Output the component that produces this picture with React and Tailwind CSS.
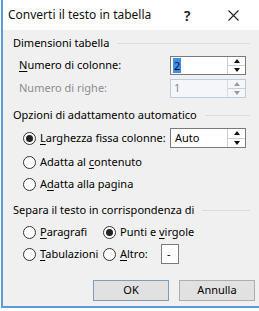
import React from 'react';

const font = { fontFamily: '"Noto Sans", Lato, sans-serif' };

const Header = ({ children, className = '' }) => (
  <div className={`flex items-center h-[16px] pl-[10px] pr-[9px] ${className}`}>
    <span className="whitespace-nowrap text-black">{children}</span>
    <div className="flex-1 h-px bg-[#dcdcdc] ml-[8px]" />
  </div>
);

const Radio = ({ checked }) => (
  <span className="w-[13px] h-[13px] rounded-full border border-[#333] bg-white flex items-center justify-center shrink-0">
    {checked && <span className="w-[7px] h-[7px] rounded-full bg-[#222]" />}
  </span>
);

const Spinner = ({ disabled }) => (
  <div className={`w-[18px] flex flex-col border-l ${disabled ? 'border-[#dcdcdc]' : 'border-[#cfcfcf]'}`}>
    <div className="flex-1 flex items-center justify-center border-b border-[#cfcfcf]">
      <span className={`w-0 h-0 border-l-[3px] border-r-[3px] border-b-[4px] border-l-transparent border-r-transparent ${disabled ? 'border-b-[#9a9a9a]' : 'border-b-[#111]'}`} />
    </div>
    <div className="flex-1 flex items-center justify-center">
      <span className={`w-0 h-0 border-l-[3px] border-r-[3px] border-t-[4px] border-l-transparent border-r-transparent ${disabled ? 'border-t-[#9a9a9a]' : 'border-t-[#111]'}`} />
    </div>
  </div>
);

const Underline = ({ children }) => <span className="underline underline-offset-2">{children}</span>;

export default function App() {
  return (
    <div className="w-[259px] h-[311px] bg-white overflow-hidden text-[11px] text-black" style={font}>
      <div className="ml-[1px] h-[308px] border-l-2 border-b-2 border-[#5b9bd8] flex flex-col">
        {/* title bar */}
        <div className="h-[30px] bg-white flex items-center pl-[5px] shrink-0">
          <span className="text-[12px] text-[#111] whitespace-nowrap">Converti il testo in tabella</span>
          <span className="ml-auto text-[14px] text-[#111] font-semibold w-[10px]">?</span>
          <svg className="ml-[34px] mr-[20px]" width="11" height="11" viewBox="0 0 11 11">
            <path d="M0.5 0.5 L10.5 10.5 M10.5 0.5 L0.5 10.5" stroke="#222" strokeWidth="1.1" />
          </svg>
        </div>

        {/* body */}
        <div className="flex-1 bg-[#f0f0f0] flex flex-col pt-[5px]">
          <Header>Dimensioni tabella</Header>

          <div className="mt-[5px] h-[19px] flex items-center pl-[16px] pr-[13px]">
            <span className="whitespace-nowrap"><Underline>N</Underline>umero di colonne:</span>
            <div className="ml-auto w-[76px] h-[19px] border border-[#7a7a7a] bg-white flex">
              <div className="flex-1 flex items-center pl-[2px]">
                <span className="bg-[#3f8fe0] text-[#0a0a40] leading-[15px] px-px">2</span>
              </div>
              <Spinner />
            </div>
          </div>

          <div className="mt-[4px] h-[19px] flex items-center pl-[16px] pr-[13px]">
            <span className="whitespace-nowrap text-[#8d8d8d]">Numero di righe:</span>
            <div className="ml-auto w-[76px] h-[19px] border border-[#b9cde6] bg-[#f4f6f9] flex">
              <div className="flex-1 flex items-center pl-[3px] text-[#8d8d8d]">1</div>
              <Spinner disabled />
            </div>
          </div>

          <Header className="mt-[9px]">Opzioni di adattamento automatico</Header>

          <div className="mt-[5px] h-[20px] flex items-center pl-[20px] pr-[13px]">
            <Radio checked />
            <span className="ml-[4px] whitespace-nowrap"><Underline>L</Underline>arghezza fissa colonne:</span>
            <div className="ml-auto w-[76px] h-[20px] border border-[#7a7a7a] bg-white flex">
              <div className="flex-1 flex items-center pl-[4px]">Auto</div>
              <Spinner />
            </div>
          </div>

          <div className="mt-[4px] h-[20px] flex items-center pl-[20px]">
            <Radio />
            <span className="ml-[4px] whitespace-nowrap">Adatta al <Underline>c</Underline>ontenuto</span>
          </div>

          <div className="mt-[2px] h-[20px] flex items-center pl-[20px]">
            <Radio />
            <span className="ml-[4px] whitespace-nowrap">A<Underline>d</Underline>atta alla pagina</span>
          </div>

          <Header className="mt-[8px]">Separa il testo in corrispondenza di</Header>

          <div className="mt-[4px] h-[20px] flex items-center pl-[20px]">
            <div className="w-[80px] flex items-center">
              <Radio />
              <span className="ml-[4px] whitespace-nowrap"><Underline>P</Underline>aragrafi</span>
            </div>
            <Radio checked />
            <span className="ml-[4px] whitespace-nowrap">Punti e <Underline>v</Underline>irgole</span>
          </div>

          <div className="mt-[2px] h-[20px] flex items-center pl-[20px]">
            <div className="w-[80px] flex items-center">
              <Radio />
              <span className="ml-[4px] whitespace-nowrap"><Underline>T</Underline>abulazioni</span>
            </div>
            <div className="w-[58px] flex items-center">
              <Radio />
              <span className="ml-[4px] whitespace-nowrap"><Underline>A</Underline>ltro:</span>
            </div>
            <div className="w-[18px] h-[20px] border border-[#7a7a7a] bg-white flex items-center pl-[5px]">-</div>
          </div>

          <div className="mt-[16px] flex justify-end gap-[10px] pr-[4px]">
            <button className="w-[76px] h-[21px] bg-[#e1e1e1] border border-[#7f9db9]">OK</button>
            <button className="w-[76px] h-[21px] bg-[#e1e1e1] border border-[#adadad]">Annulla</button>
          </div>
        </div>
      </div>
    </div>
  );
}
